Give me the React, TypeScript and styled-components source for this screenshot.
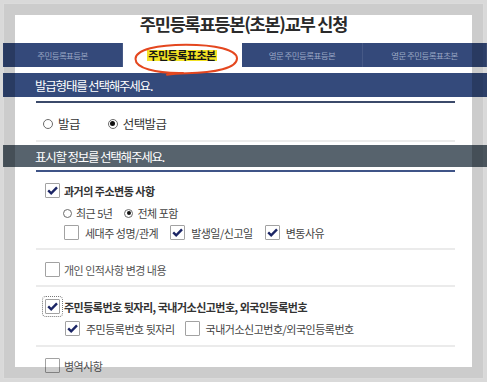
import React from 'react';
import styled, { createGlobalStyle } from 'styled-components';

const Global = createGlobalStyle`
  html, body { margin: 0; padding: 0; background: #fff; }
  body { font-family: "Noto Sans CJK KR", "Noto Sans", sans-serif; }
`;

const Page = styled.div`
  position: relative;
  width: 487px;
  height: 382px;
  overflow: hidden;
  background: #fff;
  font-family: "Noto Sans CJK KR", "Noto Sans", sans-serif;
`;

const Title = styled.h1`
  margin: 0;
  height: 43px;
  box-sizing: border-box;
  padding-top: 14px;
  text-align: center;
  font-size: 17.5px;
  line-height: 20px;
  font-weight: 700;
  letter-spacing: -1.2px;
  color: #2a2a2a;
`;

const TabBar = styled.nav`
  display: flex;
  margin-left: 3px;
  height: 24px;
  background: #34497a;
`;

const Tab = styled.div<{ $w?: number; $active?: boolean }>`
  position: relative;
  display: flex;
  align-items: center;
  justify-content: center;
  box-sizing: border-box;
  ${(p) => (p.$w ? `width: ${p.$w}px; flex: none;` : 'flex: 1;')}
  border-right: 1px solid rgba(255, 255, 255, 0.09);
  font-size: ${(p) => (p.$active ? '11px' : '8.5px')};
  font-weight: ${(p) => (p.$active ? 700 : 400)};
  letter-spacing: ${(p) => (p.$active ? '-0.5px' : '-0.6px')};
  color: ${(p) => (p.$active ? '#151515' : '#9aa6c4')};
  background: ${(p) => (p.$active ? '#fff' : 'transparent')};
`;

const Marker = styled.span`
  background: #f3e324;
  padding: 0 1px;
  line-height: 11px;
`;

const Circle = styled.svg`
  position: absolute;
  left: 10px;
  top: 0;
  width: 106px;
  height: 32px;
  overflow: visible;
  pointer-events: none;
`;

const SectionBar = styled.div<{ $tone: 'navy' | 'slate'; $h: number; $gap: number }>`
  display: flex;
  align-items: center;
  margin: ${(p) => p.$gap}px 0 0 3px;
  height: ${(p) => p.$h}px;
  padding-left: 32px;
  background: ${(p) => (p.$tone === 'navy' ? '#344a7b' : '#57636d')};
  color: #fff;
  font-size: 12.5px;
  letter-spacing: -1.2px;
`;

const Content = styled.div`
  margin: 0 32px 0 36px;
`;

const Rule = styled.div<{ $color: string; $top: number }>`
  height: 2px;
  margin-top: ${(p) => p.$top}px;
  background: ${(p) => p.$color};
`;

const IssueRow = styled.div`
  display: flex;
  align-items: center;
  gap: 28px;
  height: 37px;
  box-sizing: border-box;
  padding: 4px 0 0 7px;
  font-size: 12.5px;
  letter-spacing: -0.6px;
  color: #333;
`;

const Choice = styled.label<{ $gap: number }>`
  display: inline-flex;
  align-items: center;
  gap: ${(p) => p.$gap}px;
`;

const Radio = styled.span<{ $on?: boolean; $size: number }>`
  flex: none;
  display: inline-flex;
  align-items: center;
  justify-content: center;
  width: ${(p) => p.$size}px;
  height: ${(p) => p.$size}px;
  box-sizing: border-box;
  border: 1px solid #6b6b6b;
  border-radius: 50%;
  background: #fff;
  &::after {
    content: '';
    display: ${(p) => (p.$on ? 'block' : 'none')};
    width: ${(p) => p.$size - 5}px;
    height: ${(p) => p.$size - 5}px;
    border-radius: 50%;
    background: #111;
  }
`;

const Group = styled.div<{ $top: number; $bottom: number; $divider?: boolean }>`
  display: flex;
  flex-direction: column;
  padding: ${(p) => p.$top}px 0 ${(p) => p.$bottom}px;
  border-bottom: ${(p) => (p.$divider ? '2px solid #ebebeb' : 'none')};
`;

const Row = styled.div<{ $indent: number; $top?: number; $gap?: number; $bold?: boolean; $color?: string; $h?: number }>`
  display: flex;
  align-items: center;
  gap: ${(p) => p.$gap ?? 4}px;
  height: ${(p) => p.$h ?? 15}px;
  margin-top: ${(p) => p.$top ?? 0}px;
  padding-left: ${(p) => p.$indent}px;
  font-size: 11px;
  letter-spacing: -0.5px;
  font-weight: ${(p) => (p.$bold ? 700 : 400)};
  color: ${(p) => p.$color ?? '#444'};
  white-space: nowrap;
`;

const Box = styled.span<{ $focus?: boolean }>`
  flex: none;
  display: inline-flex;
  align-items: center;
  justify-content: center;
  width: 15px;
  height: 15px;
  box-sizing: border-box;
  border: 1px solid #a2a2a2;
  border-radius: 1px;
  background: #fff;
  ${(p) => (p.$focus ? 'outline: 1px dotted #777; outline-offset: 2px;' : '')}
`;

const Frame = styled.div`
  position: absolute;
  inset: 0;
  pointer-events: none;
  border: 3px solid rgba(0, 0, 0, 0.15);
  &::after {
    content: '';
    position: absolute;
    inset: 0;
    border: 1px solid rgba(0, 0, 0, 0.14);
    box-shadow: inset 0 0 0 11px rgba(0, 0, 0, 0.2);
  }
`;

const Check = ({ on, focus }: { on?: boolean; focus?: boolean }) => (
  <Box $focus={focus}>
    {on && (
      <svg width="13" height="13" viewBox="0 0 13 13">
        <polyline points="2.2,6.4 5.2,9.4 11,3.4" fill="none" stroke="#1b2565" strokeWidth="2.4" strokeLinejoin="miter" />
      </svg>
    )}
  </Box>
);

const Item = ({ on, label }: { on?: boolean; label: string }) => (
  <Choice $gap={6}>
    <Check on={on} />
    <span>{label}</span>
  </Choice>
);

export default function App() {
  return (
    <>
      <Global />
      <Page>
        <Title>주민등록표등본(초본)교부 신청</Title>
        <TabBar>
          <Tab $w={120}>주민등록표등본</Tab>
          <Tab $w={119} $active>
            <Marker>주민등록표초본</Marker>
            <Circle viewBox="0 0 106 32">
              <path
                d="M50 30 C 22 30.5, 2.5 25, 2.5 16 C 2.5 6.5, 25 1.8, 53 1.8 C 82 1.8, 104 6.5, 104 15.5 C 104 25, 82 30, 54 30.2 C 46 30.3, 40 30.6, 34 31.8"
                fill="none"
                stroke="#e4471f"
                strokeWidth="2"
                strokeLinecap="round"
              />
            </Circle>
          </Tab>
          <Tab $w={121}>영문 주민등록표등본</Tab>
          <Tab>영문 주민등록표초본</Tab>
        </TabBar>

        <SectionBar $tone="navy" $h={24} $gap={6}>발급형태를 선택해주세요.</SectionBar>
        <Content>
          <Rule $color="#3b4a6a" $top={4} />
          <IssueRow>
            <Choice $gap={5}>
              <Radio $size={10} />
              <span>발급</span>
            </Choice>
            <Choice $gap={5}>
              <Radio $size={10} $on />
              <span>선택발급</span>
            </Choice>
          </IssueRow>
          <Rule $color="#ebebeb" $top={0} />
        </Content>

        <SectionBar $tone="slate" $h={22} $gap={3}>표시할 정보를 선택해주세요.</SectionBar>
        <Content>
          <Rule $color="#3f5487" $top={3} />

          <Group $top={11} $bottom={8} $divider>
            <Row $indent={9} $bold $color="#333">
              <Check on />
              <span>과거의 주소변동 사항</span>
            </Row>
            <Row $indent={27} $top={8} $h={14} $gap={12}>
              <Choice $gap={4}>
                <Radio $size={9} />
                <span>최근 5년</span>
              </Choice>
              <Choice $gap={4}>
                <Radio $size={9} $on />
                <span>전체 포함</span>
              </Choice>
            </Row>
            <Row $indent={28} $top={5} $gap={12}>
              <Item label="세대주 성명/관계" />
              <Item on label="발생일/신고일" />
              <Item on label="변동사유" />
            </Row>
          </Group>

          <Group $top={12} $bottom={8} $divider>
            <Row $indent={9} $color="#555">
              <Check />
              <span>개인 인적사항 변경 내용</span>
            </Row>
          </Group>

          <Group $top={12} $bottom={9} $divider>
            <Row $indent={9} $bold $color="#333">
              <Check on focus />
              <span>주민등록번호 뒷자리, 국내거소신고번호, 외국인등록번호</span>
            </Row>
            <Row $indent={29} $top={7} $gap={10}>
              <Item on label="주민등록번호 뒷자리" />
              <Item label="국내거소신고번호/외국인등록번호" />
            </Row>
          </Group>

          <Group $top={11} $bottom={0}>
            <Row $indent={9} $color="#555">
              <Check />
              <span>병역사항</span>
            </Row>
          </Group>
        </Content>
        <Frame />
      </Page>
    </>
  );
}
